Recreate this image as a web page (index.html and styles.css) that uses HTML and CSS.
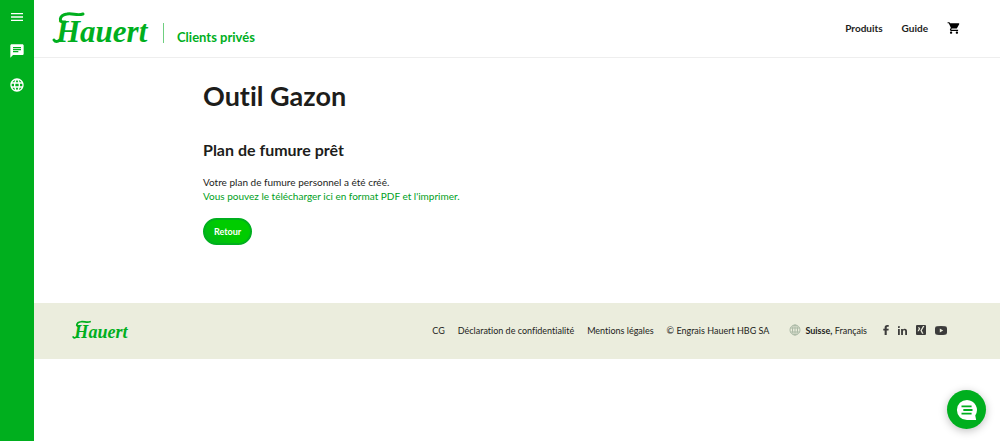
FILE: index.html
```html
<!DOCTYPE html>
<html lang="fr">
<head>
    <meta charset="UTF-8">
    <meta name="viewport" content="width=device-width, initial-scale=1.0">
    <title>Outil Gazon</title>
    <link rel="stylesheet" href="styles.css">
</head>
<body>
    <nav class="sidebar" aria-label="Outils">
        <button class="side-button" type="button" aria-label="Menu">
            <svg viewBox="0 0 24 24"><path d="M3 18h18v-2H3v2zm0-5h18v-2H3v2zm0-7v2h18V6H3z"/></svg>
        </button>
        <button class="side-button" type="button" aria-label="Contact">
            <svg viewBox="0 0 24 24"><path d="M20 2H4c-1.100 0-2 .9-2 2v18l4-4h14c1.100 0 2-.9 2-2V4c0-1.100-.9-2-2-2zM6 9h12v2H6V9zm8 5H6v-2h8v2zm4-6H6V6h12v2z"/></svg>
        </button>
        <button class="side-button" type="button" aria-label="Langue">
            <svg viewBox="0 0 24 24"><path d="M11.990 2C6.470 2 2 6.480 2 12s4.470 10 9.990 10C17.520 22 22 17.520 22 12S17.520 2 11.990 2zm6.930 6h-2.950a15.650 15.650 0 0 0-1.380-3.560A8.030 8.030 0 0 1 18.920 8zM12 4.040c.83 1.200 1.480 2.530 1.910 3.960h-3.820c.43-1.430 1.080-2.760 1.910-3.960zM4.260 14C4.100 13.360 4 12.690 4 12s.1-1.360.26-2h3.380c-.08.66-.14 1.320-.14 2s.06 1.340.14 2H4.260zm.82 2h2.950c.32 1.250.78 2.450 1.380 3.560A7.990 7.990 0 0 1 5.080 16zm2.950-8H5.080a7.990 7.990 0 0 1 4.330-3.560A15.650 15.650 0 0 0 8.030 8zM12 19.960c-.83-1.200-1.480-2.530-1.910-3.960h3.820c-.43 1.430-1.080 2.760-1.910 3.960zM14.340 14H9.660c-.09-.66-.16-1.320-.16-2s.07-1.350.16-2h4.680c.09.65.16 1.320.16 2s-.07 1.340-.16 2zm.25 5.560c.6-1.110 1.060-2.310 1.380-3.560h2.950a8.030 8.030 0 0 1-4.330 3.560zM16.360 14c.08-.66.14-1.320.14-2s-.06-1.340-.14-2h3.380c.16.64.26 1.310.26 2s-.1 1.360-.26 2h-3.380z"/></svg>
        </button>
    </nav>

    <div class="page">
        <header class="header">
            <a class="brand" href="#" aria-label="Hauert">
                <svg class="logo" viewBox="0 0 96 34">
                    <path class="swash" d="M13 11C6 12 7 4 15 3 21 2 25 5 31 3"/>
                    <path class="swash" d="M8 29Q4 32 2 29"/>
                    <text x="4" y="31">Hauert</text>
                </svg>
            </a>
            <a class="section-name" href="#">Clients privés</a>
            <nav class="main-nav">
                <a href="#">Produits</a>
                <a href="#">Guide</a>
                <a class="cart" href="#" aria-label="Panier">
                    <svg viewBox="0 0 24 24"><path d="M7 18c-1.100 0-1.990.9-1.990 2S5.900 22 7 22s2-.9 2-2-.9-2-2-2zM1 2v2h2l3.600 7.590-1.350 2.450c-.16.280-.25.610-.25.960 0 1.100.9 2 2 2h12v-2H7.420c-.14 0-.25-.11-.25-.25l.03-.12.900-1.630h7.450c.75 0 1.410-.41 1.750-1.030l3.580-6.490A1 1 0 0 0 20 4H5.210l-.94-2H1zm16 16c-1.100 0-1.990.9-1.990 2s.89 2 1.990 2 2-.9 2-2-.9-2-2-2z"/></svg>
                </a>
            </nav>
        </header>

        <main class="content">
            <h1>Outil Gazon</h1>
            <h2>Plan de fumure prêt</h2>
            <p>
                Votre plan de fumure personnel a été créé.<br>
                <a href="#">Vous pouvez le télécharger ici en format PDF et l'imprimer.</a>
            </p>
            <button class="back" type="button">Retour</button>
        </main>

        <footer class="footer">
            <a class="footer-brand" href="#" aria-label="Hauert">
                <svg class="logo" viewBox="0 0 96 34">
                    <path class="swash" d="M13 11C6 12 7 4 15 3 21 2 25 5 31 3"/>
                    <path class="swash" d="M8 29Q4 32 2 29"/>
                    <text x="4" y="31">Hauert</text>
                </svg>
            </a>
            <div class="footer-links">
                <a href="#">CG</a>
                <a href="#">Déclaration de confidentialité</a>
                <a href="#">Mentions légales</a>
                <span>© Engrais Hauert HBG SA</span>
            </div>
            <a class="language" href="#">
                <svg viewBox="0 0 24 24"><circle cx="12" cy="12" r="10"/><ellipse cx="12" cy="12" rx="5" ry="10"/><path d="M12 2v20M3 8h18M3 16h18"/></svg>
                <span><strong>Suisse,</strong> Français</span>
            </a>
            <div class="social">
                <a href="#" aria-label="Facebook"><svg width="6" height="10" viewBox="0 0 6 11"><path d="M1.500 11V6H0V4h1.500V2.700C1.500 1 2.500 0 4.200 0H6v2H4.700c-.7 0-.9.300-.9.900V4H6l-.3 2H3.800v5z"/></svg></a>
                <a href="#" aria-label="LinkedIn"><svg width="9" height="9" viewBox="0 0 10 10"><path d="M0 3.300h2V10H0zM1 0a1.150 1.150 0 1 1 0 2.300A1.150 1.150 0 0 1 1 0zM3.400 3.300h2v.9c.4-.7 1.100-1.100 2-1.100C9.400 3.100 10 4.400 10 6v4H8V6.400c0-.9-.1-1.600-1.100-1.600-1.100 0-1.400.8-1.400 1.600V10h-2z"/></svg></a>
                <a href="#" aria-label="Xing"><svg width="10" height="10" viewBox="0 0 10 10"><path fill-rule="evenodd" d="M1 0h8a1 1 0 0 1 1 1v8a1 1 0 0 1-1 1H1a1 1 0 0 1-1-1V1a1 1 0 0 1 1-1zM1.900 2.300l.9 1.500-1.300 2.400h1.300l1.400-2.400-.9-1.500zM7 1L4.400 5.500 6.100 8.800h1.400L5.800 5.500 8.400 1z"/></svg></a>
                <a href="#" aria-label="YouTube"><svg width="12" height="9" viewBox="0 0 12 9"><path fill-rule="evenodd" d="M2 .2Q6-.2 10 .2 12 .3 12 2.500v4Q12 8.700 10 8.800 6 9.200 2 8.800 0 8.700 0 6.500v-4Q0 .3 2 .2zM4.800 2.500v4L8.200 4.500z"/></svg></a>
            </div>
        </footer>
    </div>

    <button class="chat" type="button" aria-label="Ouvrir le chat">
        <svg viewBox="0 0 24 24"><path class="bubble" d="M12 1a11 11 0 1 0 0 22h10l-1-5A11 11 0 0 0 12 1z"/><path class="lines" d="M6 8h11M8 12h10M6 16h11"/></svg>
    </button>
</body>
</html>
```

FILE: styles.css
```css
* {
    box-sizing: border-box;
}
body {
    font-family: "Lato", "Open Sans", sans-serif;
    font-variant-ligatures: none;
    display: flex;
    min-height: 100vh;
    margin: 0;
    background: #fff;
    color: #1d1d1b;
    font-size: 10px;
}
a {
    color: inherit;
    text-decoration: none;
}
svg {
    display: block;
}
button {
    font-family: inherit;
    border: none;
    padding: 0;
    cursor: pointer;
}
.sidebar {
    width: 34px;
    flex: none;
    display: flex;
    flex-direction: column;
    align-items: center;
    gap: 18px;
    padding-top: 9px;
    background: #00af1e;
}
.side-button {
    background: none;
}
.side-button svg {
    width: 16px;
    height: 16px;
    fill: #fff;
}
.page {
    flex: 1;
    min-width: 0;
}
.header {
    display: flex;
    align-items: center;
    height: 58px;
    padding: 0 39px 2px 18px;
    border-bottom: 1px solid #eee;
}
.logo {
    width: 96px;
    fill: #00af1e;
    font-family: "Brush Script MT", "Liberation Serif", serif;
    font-size: 31px;
    font-style: italic;
    font-weight: bold;
    overflow: visible;
}
.logo .swash {
    fill: none;
    stroke: #00af1e;
    stroke-width: 3;
    stroke-linecap: round;
}
.section-name {
    margin: 10px 0 0 15px;
    padding: 8px 0 0 13px;
    border-left: 1px solid #6fcf80;
    color: #00af1e;
    font-size: 13px;
    font-weight: 700;
    line-height: 12px;
}
.main-nav {
    display: flex;
    align-items: center;
    gap: 19px;
    margin-left: auto;
    font-weight: 700;
}
.cart svg {
    width: 14px;
    height: 14px;
}
.content {
    padding: 20px 40px 58px 169px;
}
h1 {
    margin: 0;
    font-size: 27px;
    font-weight: 700;
    line-height: 36px;
}
h2 {
    margin: 24px 0 13px;
    font-size: 16px;
    font-weight: 700;
    line-height: 24px;
}
p {
    margin: 0 0 15px;
    line-height: 14px;
}
p a {
    color: #00a01c;
}
.back {
    height: 27px;
    padding: 0 9px;
    border: 2px solid #00af1e;
    border-radius: 14px;
    background: linear-gradient(45deg, #00b41c, #0c0 50%);
    color: #fff;
    font-size: 9px;
    font-weight: 700;
}
.footer {
    display: flex;
    align-items: center;
    height: 56px;
    padding: 0 53px 2px 38px;
    background: #ebeddd;
    font-size: 9px;
}
.footer .logo {
    width: 56px;
}
.footer-links {
    display: flex;
    gap: 13px;
    margin-left: auto;
}
.language {
    display: flex;
    align-items: center;
    gap: 4px;
    margin-left: 20px;
}
.language svg {
    width: 12px;
    height: 12px;
    fill: none;
    stroke: #aab9a5;
    stroke-width: 2;
}
.language strong {
    font-weight: 700;
}
.social {
    display: flex;
    align-items: center;
    gap: 9px;
    margin-left: 16px;
}
.social svg {
    fill: #3c3c3b;
}
.chat {
    position: fixed;
    right: 14px;
    bottom: 12px;
    width: 39px;
    height: 39px;
    display: flex;
    align-items: center;
    justify-content: center;
    border-radius: 50%;
    background: #00af1e;
    box-shadow: 0 2px 8px rgba(0, 0, 0, 0.25);
}
.chat svg {
    width: 22px;
    height: 22px;
}
.chat .bubble {
    fill: #fff;
}
.chat .lines {
    stroke: #00af1e;
    stroke-width: 2;
}
```
